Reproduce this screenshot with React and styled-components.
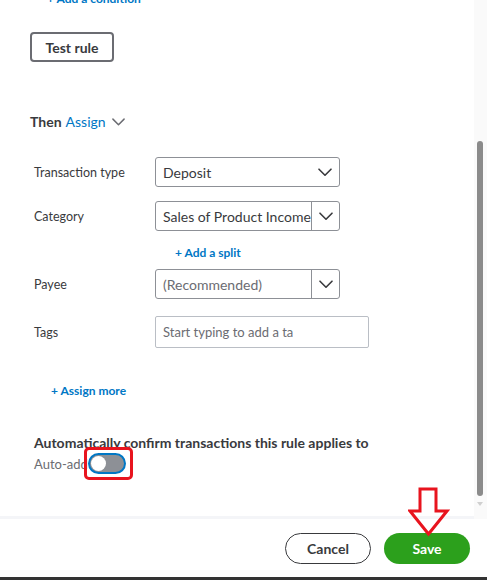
import styled, { createGlobalStyle } from "styled-components";

const Global = createGlobalStyle`
  html, body {
    margin: 0;
    padding: 0;
    background: #ffffff;
  }
  body {
    font-family: Lato, "Open Sans", "Liberation Sans", sans-serif;
    color: #393a3d;
  }
`;

const Chevron = ({ color = "#393a3d", size = 14 }) => (
    <svg width={size} height={size * 0.6} viewBox="0 0 14 8" fill="none">
        <path d="M1 1l6 6 6-6" stroke={color} strokeWidth="1.6" strokeLinecap="round" strokeLinejoin="round"/>
    </svg>
);

const App = () => {
    return (
        <>
            <Global/>
            <Window>
                <Body>
                    <Content>
                        <AddLink $left={17} style={{marginTop: -9}}>+ Add a condition</AddLink>
                        <OutlineButton>Test rule</OutlineButton>
                        <ThenRow>
                            <strong>Then</strong>
                            <span className="blue">Assign</span>
                            <Chevron color="#6b6c72" size={13}/>
                        </ThenRow>

                        <FormRow $mt={25}>
                            <Label>Transaction type</Label>
                            <Select $w={185}>
                                <Value>Deposit</Value>
                                <Arrow><Chevron/></Arrow>
                            </Select>
                        </FormRow>
                        <FormRow $mt={14}>
                            <Label>Category</Label>
                            <Select $w={185}>
                                <Value $clip={148}>Sales of Product Income</Value>
                                <Arrow $split><Chevron/></Arrow>
                            </Select>
                        </FormRow>
                        <AddLink $left={145} style={{marginTop: 14}}>+ Add a split</AddLink>
                        <FormRow $mt={8}>
                            <Label>Payee</Label>
                            <Select $w={185}>
                                <Value $muted $clip={148}>(Recommended)</Value>
                                <Arrow $split><Chevron/></Arrow>
                            </Select>
                        </FormRow>
                        <FormRow $mt={17}>
                            <Label>Tags</Label>
                            <TagInput>
                                <Value $muted $clip={130}>Start typing to add a tag</Value>
                            </TagInput>
                        </FormRow>

                        <AddLink $left={21} style={{marginTop: 35}}>+ Assign more</AddLink>

                        <AutoTitle>Automatically confirm transactions this rule applies to</AutoTitle>
                        <AutoRow>
                            <span>Auto-add</span>
                            <ToggleWrap>
                                <Toggle><Knob/></Toggle>
                                <RedBox/>
                            </ToggleWrap>
                        </AutoRow>
                    </Content>
                    <ScrollTrack>
                        <ScrollThumb/>
                        <ScrollDown/>
                    </ScrollTrack>
                </Body>
                <Footer>
                    <PillButton>Cancel</PillButton>
                    <SaveWrap>
                        <PillButton $primary>Save</PillButton>
                        <RedArrow width="42" height="50" viewBox="0 0 42 50">
                            <path d="M12 2 H28 V24 H39 L20.5 47 L2 24 H12 Z" fill="none" stroke="#e8141e" strokeWidth="3" strokeLinejoin="miter"/>
                        </RedArrow>
                    </SaveWrap>
                </Footer>
                <BottomEdge/>
            </Window>
        </>
    );
};

const Window = styled.div`
  width: 487px;
  height: 580px;
  display: flex;
  flex-direction: column;
  overflow: hidden;
  position: relative;
  background: #ffffff;
`;

const Body = styled.div`
  display: flex;
  height: 516px;
  border-bottom: 3px solid #f4f5f8;
  margin-right: 13px;
  position: relative;
`;

const Content = styled.div`
  flex: 1;
  padding-left: 30px;
  display: flex;
  flex-direction: column;
  align-items: flex-start;
`;

const AddLink = styled.div`
  margin-left: ${p => p.$left}px;
  color: #0077c5;
  font-size: 12px;
  font-weight: 700;
  line-height: 16px;
`;

const OutlineButton = styled.button`
  margin-top: 25px;
  width: 84px;
  height: 30px;
  border: 2px solid #6b6c72;
  border-radius: 4px;
  background: #fff;
  font-family: inherit;
  font-size: 14px;
  font-weight: 700;
  color: #393a3d;
  padding: 0;
`;

const ThenRow = styled.div`
  margin-top: 50px;
  display: flex;
  align-items: center;
  gap: 4px;
  font-size: 14px;
  line-height: 20px;

  strong {
    font-weight: 700;
    color: #393a3d;
  }

  .blue {
    color: #0077c5;
  }

  svg {
    margin-left: 2px;
  }
`;

const FormRow = styled.div`
  margin-top: ${p => p.$mt}px;
  display: flex;
  align-items: center;
  padding-left: 4px;
`;

const Label = styled.div`
  width: 121px;
  font-size: 12.5px;
  color: #393a3d;
`;

const Select = styled.div`
  width: ${p => p.$w}px;
  height: 30px;
  box-sizing: border-box;
  border: 1px solid #8d9096;
  border-radius: 3px;
  display: flex;
  align-items: center;
  background: #fff;
`;

const Value = styled.div`
  flex: ${p => (p.$clip ? "none" : 1)};
  width: ${p => (p.$clip ? `${p.$clip}px` : "auto")};
  padding-left: 7px;
  font-size: 14px;
  color: ${p => (p.$muted ? "#6b6c72" : "#393a3d")};
  white-space: nowrap;
  overflow: hidden;
`;

const Arrow = styled.div`
  margin-left: auto;
  width: 29px;
  height: 100%;
  display: flex;
  align-items: center;
  justify-content: center;
  border-left: ${p => (p.$split ? "1px solid #8d9096" : "none")};
`;

const TagInput = styled.div`
  width: 214px;
  height: 32px;
  box-sizing: border-box;
  border: 1px solid #babec5;
  border-radius: 2px;
  display: flex;
  align-items: center;

  ${Value} {
    font-size: 13px;
  }
`;

const AutoTitle = styled.div`
  margin-top: 35px;
  margin-left: 4px;
  font-size: 14px;
  font-weight: 700;
  color: #393a3d;
  line-height: 18px;
`;

const AutoRow = styled.div`
  margin-top: 1px;
  margin-left: 4px;
  display: flex;
  align-items: center;
  font-size: 13px;
  color: #6b6c72;
`;

const ToggleWrap = styled.div`
  position: relative;
  margin-left: 0;
`;

const Toggle = styled.div`
  width: 38px;
  height: 21px;
  box-sizing: border-box;
  border: 2px solid #0077c5;
  border-radius: 11px;
  background: #8d9096;
  display: flex;
  align-items: center;
  padding-left: 1px;
`;

const Knob = styled.div`
  width: 15px;
  height: 15px;
  border-radius: 50%;
  background: #fff;
`;

const RedBox = styled.div`
  position: absolute;
  left: -4px;
  top: -6px;
  width: 49px;
  height: 33px;
  box-sizing: border-box;
  border: 3px solid #e8141e;
  border-radius: 5px;
`;

const ScrollTrack = styled.div`
  position: absolute;
  right: -13px;
  top: 0;
  bottom: -3px;
  width: 13px;
  background: #fafafa;
`;

const ScrollThumb = styled.div`
  position: absolute;
  left: 3px;
  top: 141px;
  width: 6px;
  height: 355px;
  border-radius: 3px;
  background: #8b8b8b;
`;

const ScrollDown = styled.div`
  position: absolute;
  left: 3px;
  top: 502px;
  width: 0;
  height: 0;
  border-left: 3px solid transparent;
  border-right: 3px solid transparent;
  border-top: 4px solid #d0d0d0;
`;

const Footer = styled.div`
  flex: 1;
  display: flex;
  justify-content: flex-end;
  align-items: flex-start;
  gap: 13px;
  padding: 14px 17px 0 0;
`;

const SaveWrap = styled.div`
  position: relative;
`;

const PillButton = styled.button`
  width: 86px;
  height: 31px;
  box-sizing: border-box;
  border-radius: 16px;
  font-family: inherit;
  font-size: 14px;
  font-weight: 700;
  padding: 0;
  border: ${p => (p.$primary ? "none" : "1.5px solid #393a3d")};
  background: ${p => (p.$primary ? "#2ca01c" : "#ffffff")};
  color: ${p => (p.$primary ? "#ffffff" : "#393a3d")};
`;

const RedArrow = styled.svg`
  position: absolute;
  left: 24px;
  top: -46px;
`;

const BottomEdge = styled.div`
  position: absolute;
  left: 0;
  right: 0;
  bottom: 0;
  height: 3px;
  background: #333333;
`;

export default App;
